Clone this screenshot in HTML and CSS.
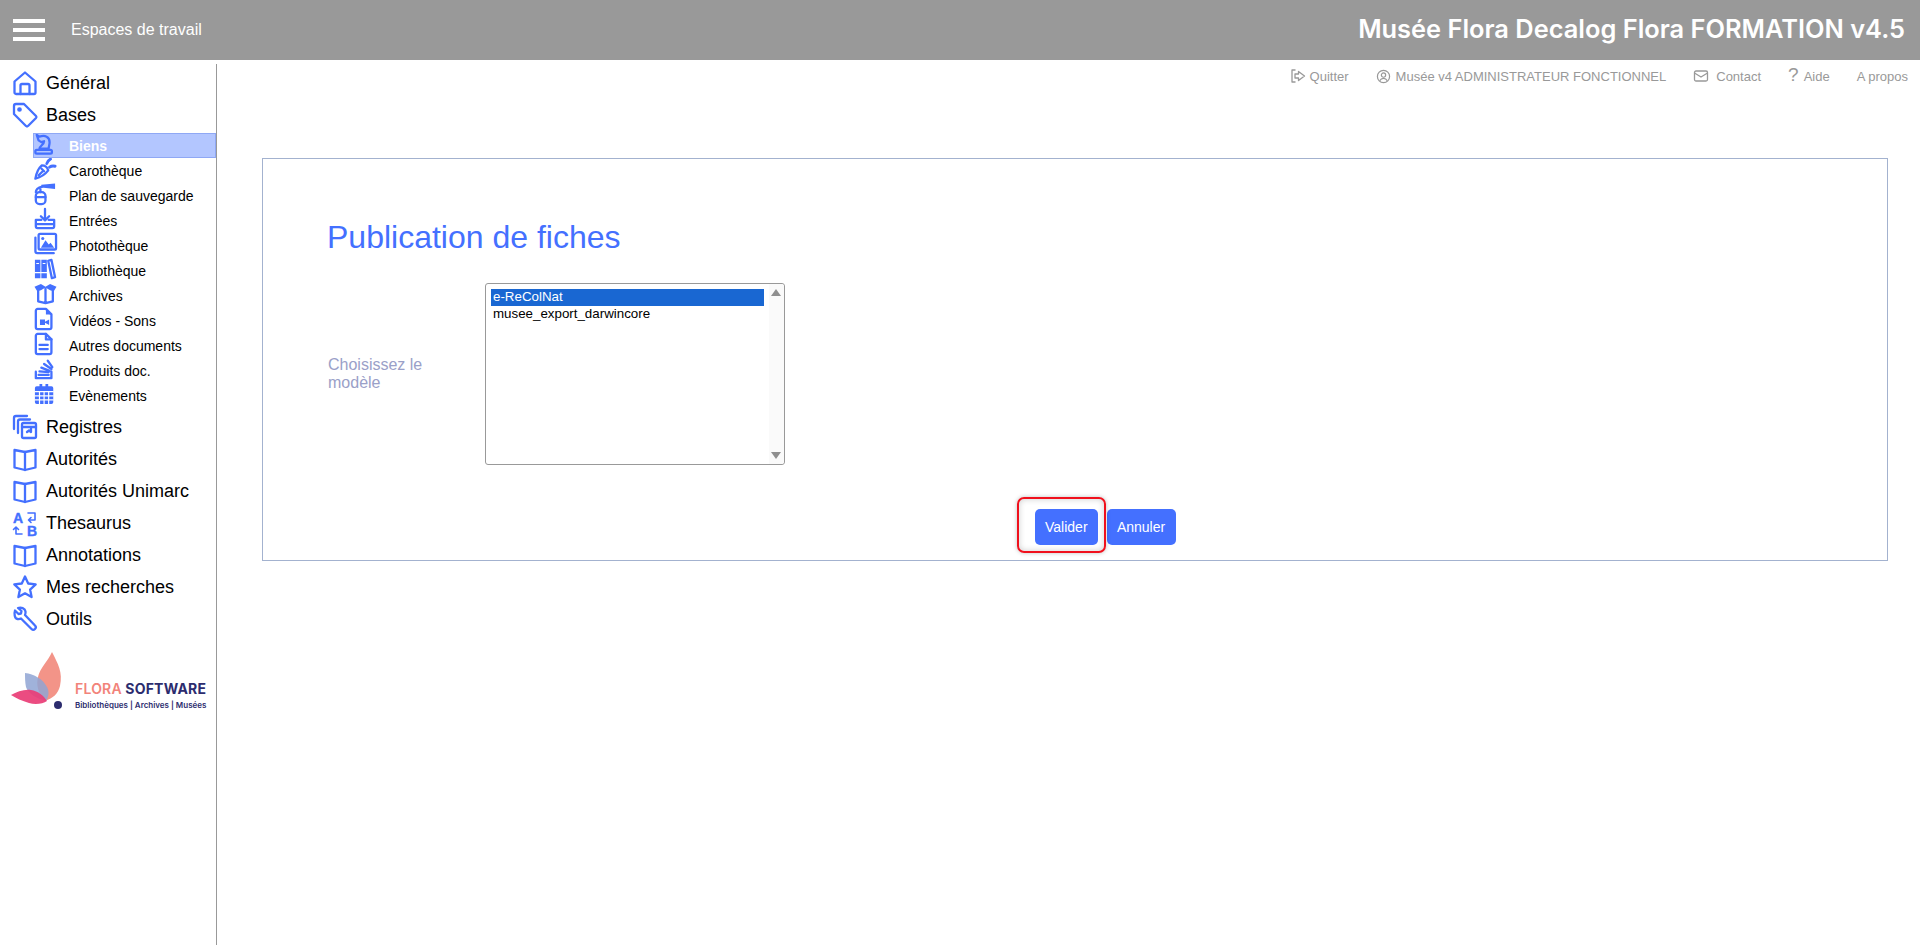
FILE: index.html
```html
<!DOCTYPE html>
<html lang="fr">
<head>
<meta charset="utf-8">
<title>Publication de fiches</title>
<link rel="stylesheet" href="styles.css">
</head>
<body>
<header class="topbar">
  <div class="burger"><span></span><span></span><span></span></div>
  <div class="workspaces">Espaces de travail</div>
  <div class="apptitle">Musée Flora Decalog Flora FORMATION v4.5</div>
</header>
<div class="layout">
  <aside class="sidebar">
    <nav>
      <a class="l1"><svg class="ic1" viewBox="0 0 24 24"><path d="M1.500 10.500 12 1.500l10.500 9v11a1.500 1.500 0 0 1-1.500 1.500H3a1.500 1.500 0 0 1-1.500-1.500z"/><path d="M7.500 23v-8.500a1.500 1.500 0 0 1 1.500-1.500h6a1.500 1.500 0 0 1 1.500 1.500V23"/></svg>Général</a>
      <a class="l1"><svg class="ic1" viewBox="0 0 24 24"><path d="M1 3a2 2 0 0 1 2-2h8l12 12a1.500 1.500 0 0 1 0 2l-8 8a1.500 1.500 0 0 1-2 0L1 11z"/><circle cx="6.500" cy="6.500" r="1.200"/></svg>Bases</a>
      <div class="sublist">
        <a class="l2 active"><svg class="ic2" viewBox="0 0 24 24"><path d="M3 2l3 2c6-2 11 0 11 6 0 3-1 5-1 7H6c0-3 5-4 5-8l-3 1-3-2-1-3z"/><rect x="1.500" y="18.500" width="18" height="4" rx="1.500"/></svg>Biens</a>
        <a class="l2"><svg class="ic2" viewBox="0 0 24 24"><path d="M1.500 22.500c1-6 3-11 7-14.500 3 0 6 2 7 5.500-3 4-8 7.500-14 9z"/><path d="M5 19l4-4M8 11.500l3 3"/><path d="M14 6c.5-2 1.500-3.500 4-5M17 10c2-1.500 4-1.500 6-1" stroke-width="3.200"/></svg>Carothèque</a>
        <a class="l2"><svg class="ic2" viewBox="0 0 24 24"><rect x="2" y="10" width="10.500" height="13" rx="4"/><path d="M2 15.500h10.500M7 10V5M2 10c0-3 3-5 7-6"/><path class="solid" d="M8 2 23 .5v6L8 5z"/></svg>Plan de sauvegarde</a>
        <a class="l2"><svg class="ic2" viewBox="0 0 24 24"><path d="M12 1v12M7.500 9l4.500 4.500L16.500 9"/><path d="M8 13H2v7a2 2 0 0 0 2 2h16a2 2 0 0 0 2-2v-7h-6M2 17.500h20"/></svg>Entrées</a>
        <a class="l2"><svg class="ic2 wide" viewBox="0 0 24 24"><rect x="4.500" y="1" width="19" height="17" rx="1.500"/><path class="solid" d="m7 16 5-8 3.500 4.500 2-2 4 5.500z"/><circle class="solid" cx="9" cy="6" r="1.700"/><path d="M1 5v15a2 2 0 0 0 2 2h18"/></svg>Photothèque</a>
        <a class="l2"><svg class="ic2" viewBox="0 0 24 24"><path class="solid" d="M1 2h6v20H1zM8 2h6v20H8z"/><path class="grid" d="M3 6h2M10 6h2M1 16h6M8 16h6"/><path d="m15.500 3 3.500-1 4 19-3.500 1z"/></svg>Bibliothèque</a>
        <a class="l2"><svg class="ic2 wide" viewBox="0 0 24 24"><path class="solid" d="M0 4 7 1l5 3 5-3 7 3-3 5-4-1-5-3-5 3-4 1z"/><path d="M4 8v12l8 2 8-2V8M12 6v16"/></svg>Archives</a>
        <a class="l2"><svg class="ic2" viewBox="0 0 24 24"><path d="M4 1h9l6 6v14a2 2 0 0 1-2 2H4a2 2 0 0 1-2-2V3a2 2 0 0 1 2-2z"/><path class="solid" d="M13 1v6h6zM6.500 12.500H12v6H6.500zM12 15l4.500-2.500v6L12 16z"/></svg>Vidéos - Sons</a>
        <a class="l2"><svg class="ic2" viewBox="0 0 24 24"><path d="M4 1h9l6 6v14a2 2 0 0 1-2 2H4a2 2 0 0 1-2-2V3a2 2 0 0 1 2-2z"/><path d="M13 1v6h6M6 13h9M6 17.500h9"/></svg>Autres documents</a>
        <a class="l2"><svg class="ic2" viewBox="0 0 24 24"><path d="M2 15v7h17v-7M5 18.500h11M6 14.500l10 1M8 10.500l9 3.500M11 6.500l8 5.500M15 3l5 7"/></svg>Produits doc.</a>
        <a class="l2"><svg class="ic2" viewBox="0 0 24 24"><path class="solid" d="M3 3.500h3V1h3v2.500h3.500V1h3v2.500H19a2 2 0 0 1 2 2V21a2 2 0 0 1-2 2H3a2 2 0 0 1-2-2V5.500a2 2 0 0 1 2-2z"/><path class="grid" d="M1 9.500h20M1 14h20M1 18.500h20M6 9.500V23M11 9.500V23M16 9.500V23"/></svg>Evènements</a>
      </div>
      <a class="l1"><svg class="ic1" viewBox="0 0 24 24"><path d="M1 14V3a2 2 0 0 1 2-2h11"/><path d="M5 18V6.500a2 2 0 0 1 2-2h10"/><rect x="9" y="8" width="14" height="15" rx="1.500"/><path d="M9 12h14M18 12v5l-2-1.500-2 1.500"/></svg>Registres</a>
      <a class="l1"><svg class="ic1 book" viewBox="0 0 24 24"><path d="M1.500 3v17.500L12 23l10.500-2.500V3L12 5z"/><path d="M12 5v18"/></svg>Autorités</a>
      <a class="l1"><svg class="ic1 book" viewBox="0 0 24 24"><path d="M1.500 3v17.500L12 23l10.500-2.500V3L12 5z"/><path d="M12 5v18"/></svg>Autorités Unimarc</a>
      <a class="l1"><svg class="ic1 thin" viewBox="0 0 24 24"><text class="icontext" x="0" y="12">A</text><text class="icontext" x="14" y="24.500">B</text><path d="M15 2h7v7h-6M18 6.500 15.500 9l2.500 2.500M9 23H3v-7M.5 18.500 3 16l2.500 2.500"/></svg>Thesaurus</a>
      <a class="l1"><svg class="ic1 book" viewBox="0 0 24 24"><path d="M1.500 3v17.500L12 23l10.500-2.500V3L12 5z"/><path d="M12 5v18"/></svg>Annotations</a>
      <a class="l1"><svg class="ic1" viewBox="0 0 24 24"><path d="m12 1.500 3.200 7 7.500.9-5.600 5.200 1.500 7.500-6.600-3.800-6.600 3.800 1.500-7.500L1.300 9.400l7.500-.9z"/></svg>Mes recherches</a>
      <a class="l1"><svg class="ic1" viewBox="0 0 24 24"><path d="M2 3.500 5.500 7l2.500-.5L8.500 4 5 1c3-1 7 0 7.500 3.500.2 1.500 0 2.500-.5 3.500l10 10.500c1 1 1 2.500 0 3.500s-2.500 1-3.500 0L8 11.500c-1 .5-2.500.7-3.500.5C1.500 11.500 1 6.500 2 3.500z"/></svg>Outils</a>
    </nav>
    <div class="logo">
      <svg class="logomark" viewBox="0 0 62 62"><path fill="#f39488" d="M42 0c6 12 11 20 8 34-2 8-7 12-15 15-7-8-9-16-7-24 2-9 10-16 14-25z"/><path fill="#8fa5d3" fill-opacity=".85" d="M15 21c9 1 18 6 22 14 3 5 1 11-1 14-8-2-18-7-20-14-1-5-1-9-1-14z"/><path fill="#e93d76" fill-opacity=".92" d="M1 43c6-3 13-6 20-5 7 1 13 6 16 11-4 3-12 4-18 2-7-2-13-5-18-8z"/><circle cx="48" cy="53" r="4" fill="#2c2c6e"/></svg>
      <div class="logotext">
        <div class="logoname"><span class="flora">FLORA</span> SOFTWARE</div>
        <div class="logosub">Bibliothèques | Archives | Musées</div>
      </div>
    </div>
  </aside>
  <main class="main">
    <div class="toplinks">
      <a class="tl"><svg class="tic" viewBox="0 0 16 16"><path d="M5.500 2H2v12h3.500"/><path d="M8.500 3.500 14.500 8l-6 4.500V10H5V6h3.500z"/></svg>Quitter</a>
      <a class="tl"><svg class="tic tic-user" viewBox="0 0 16 16"><circle cx="8" cy="8" r="6.500"/><circle cx="8" cy="6.500" r="2.300"/><path d="M4 12.500c1-2 2.500-2.500 4-2.500s3 .5 4 2.500"/></svg>Musée v4 ADMINISTRATEUR FONCTIONNEL</a>
      <a class="tl"><svg class="tic tic-mail" viewBox="0 0 16 16"><rect x="1.500" y="3" width="13" height="10" rx="1.500"/><path d="m1.500 5 6.500 4 6.500-4"/></svg>Contact</a>
      <a class="tl"><span class="qmark">?</span>Aide</a>
      <a class="tl">A propos</a>
    </div>
    <section class="panel">
      <h1 class="heading">Publication de fiches</h1>
      <div class="formrow">
        <div class="fieldlabel">Choisissez le modèle</div>
        <div class="listbox">
          <div class="options">
            <div class="option selected">e-ReColNat</div>
            <div class="option">musee_export_darwincore</div>
          </div>
          <div class="scrollbar"><span class="arrow-up"></span><span class="arrow-down"></span></div>
        </div>
      </div>
      <div class="actions">
        <button class="btn btn-marked">Valider<span class="marker"></span></button>
        <button class="btn btn-cancel">Annuler</button>
      </div>
    </section>
  </main>
</div>
</body>
</html>
```

FILE: styles.css
```css
* { box-sizing: border-box; }
html, body { margin: 0; height: 100%; overflow: hidden; }
body { font-family: "Liberation Sans", Arial, sans-serif; background: #fff; color: #000; }

.topbar { height: 60px; background: #999; display: flex; align-items: center; padding: 0 15px 0 13px; color: #fff; }
.burger { width: 32px; height: 22px; display: flex; flex-direction: column; justify-content: space-between; }
.burger span { display: block; height: 4px; background: #fff; }
.workspaces { margin-left: 26px; font-size: 16px; }
.apptitle { margin: -3px 0 0 auto; font-family: Inter, "Liberation Sans", sans-serif; font-weight: 600; font-size: 25.400px; color: #fff; white-space: nowrap; }

.layout { display: flex; height: 885px; }
.sidebar { width: 217px; margin-top: 4px; border-right: 1px solid #999; padding-top: 3px; flex: none; }
.l1 { display: flex; align-items: center; height: 32px; padding-left: 13px; font-size: 18px; }
.ic1 { width: 24px; height: 24px; margin-right: 9px; flex: none; fill: none; stroke: #4470ff; stroke-width: 2.300; stroke-linejoin: round; stroke-linecap: round; overflow: visible; }
.thin { stroke-width: 1.600; }
.icontext { font: 700 14px "Liberation Sans", Arial, sans-serif; fill: #4470ff; stroke: #4470ff; stroke-width: .4; }
.sublist { margin: 2px 0 3px; }
.l2 { display: flex; align-items: center; height: 25px; margin-left: 33px; padding-left: 1px; font-size: 14px; }
.ic2 { width: 22px; height: 22px; margin: -3px 13px 0 0; flex: none; fill: none; stroke: #4470ff; stroke-width: 2.500; stroke-linejoin: round; stroke-linecap: round; overflow: visible; }
.wide { width: 23px; margin-right: 12px; }
.solid { fill: #4470ff; stroke: none; }
.grid { stroke: #fff; stroke-width: 1.300; }
.active { background: #b3c6ff; outline: 1px solid #8fa8f5; outline-offset: -1px; color: #fff; font-weight: 700; }

.logo { display: flex; margin: 17px 0 0 10px; height: 62px; }
.logomark { width: 62px; height: 62px; flex: none; }
.logotext { margin: 29px 0 0 3px; }
.logoname { font-family: Inter, sans-serif; font-weight: 700; font-size: 14px; line-height: 16px; letter-spacing: .2px; color: #2c2c6e; white-space: nowrap; }
.flora { color: #f2837a; font-weight: 600; }
.logosub { font-family: Inter, sans-serif; font-weight: 600; font-size: 8px; line-height: 10px; margin-top: 3px; color: #2c2c6e; white-space: nowrap; }

.main { flex: 1; min-width: 0; }
.toplinks { display: flex; justify-content: flex-end; align-items: center; height: 32px; gap: 27px; padding-right: 12px; font-size: 13px; color: #999; }
.tl { display: flex; align-items: center; white-space: nowrap; }
.tic { width: 16px; height: 16px; margin-right: 4px; fill: none; stroke: #999; stroke-width: 1.300; stroke-linejoin: round; }
.tic-user { width: 15px; height: 15px; margin-right: 5px; }
.tic-mail { margin-right: 7px; }
.qmark { font-size: 19px; line-height: 16px; margin-right: 5px; margin-top: -2px; }

.panel { margin: 66px 32px 0 45px; height: 403px; border: 1px solid #a3b2cf; padding: 60px 0 0 65px; }
.heading { margin: 0 0 28px -1px; font-size: 32px; line-height: 36px; font-weight: 400; color: #4470ff; }
.formrow { display: flex; align-items: center; }
.fieldlabel { width: 157px; padding-right: 60px; font-size: 16px; line-height: 18.500px; color: #9aa0c8; flex: none; }
.listbox { width: 300px; height: 182px; border: 1px solid #999; border-radius: 3px; display: flex; padding: 5px 0 0 5px; position: relative; }
.options { width: 273px; font-size: 13.330px; }
.option { height: 17px; line-height: 15px; padding-left: 2px; white-space: nowrap; }
.selected { background: #1967d2; color: #fff; }
.scrollbar { position: absolute; right: 0; top: 0; bottom: 0; width: 15px; background: #fafafa; border-radius: 0 3px 3px 0; }
.arrow-up, .arrow-down { position: absolute; left: 2px; width: 0; height: 0; border-left: 5px solid transparent; border-right: 5px solid transparent; }
.arrow-up { top: 5px; border-bottom: 7px solid #8f8f8f; }
.arrow-down { bottom: 5px; border-top: 7px solid #8f8f8f; }

.actions { display: flex; gap: 9px; margin: 44px 0 0 707px; }
.btn { height: 36px; padding: 0 10px; border: 0; border-radius: 5px; background: #4470ff; color: #fff; font: 14px "Liberation Sans", Arial, sans-serif; }
.btn-cancel { width: 69px; padding: 0; }
.btn-marked { position: relative; }
.marker { position: absolute; left: -18px; right: -8px; top: -12px; bottom: -8px; border: 2px solid #f0101c; border-radius: 7px; box-shadow: 0 0 4px rgba(0,0,0,.25), inset 0 0 6px rgba(0,0,0,.2); }
```
